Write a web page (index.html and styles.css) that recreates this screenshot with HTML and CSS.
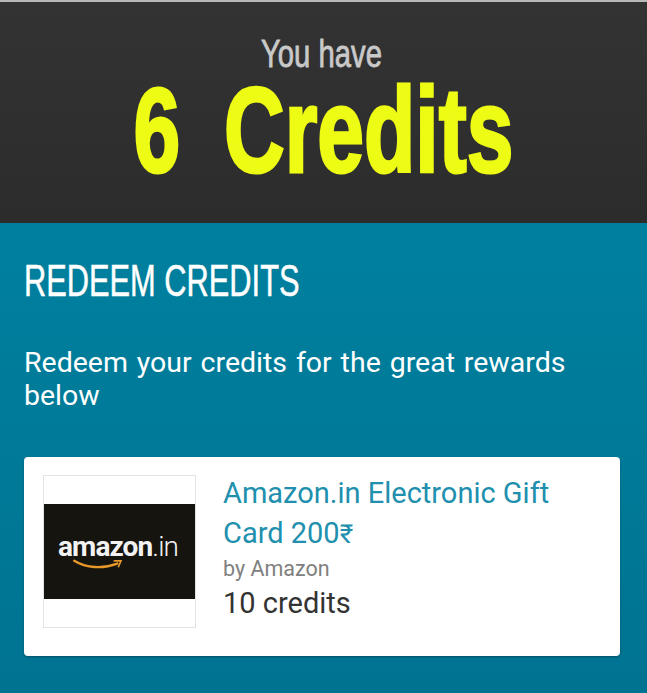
FILE: index.html
```html
<!DOCTYPE html>
<html lang="en">
<head>
    <meta charset="UTF-8">
    <meta name="viewport" content="width=device-width, initial-scale=1.0">
    <title>Credits</title>
    <link rel="stylesheet" href="styles.css">
</head>
<body>
    <div class="balance">
        <div class="balance-label">You have</div>
        <div class="balance-value">6&nbsp;Credits</div>
    </div>
    <div class="redeem">
        <h1 class="redeem-title">REDEEM CREDITS</h1>
        <p class="redeem-text">Redeem your credits for the great rewards below</p>
        <div class="reward">
            <div class="reward-thumb">
                <div class="logo">
                    <span class="logo-word">amazon<span class="logo-tld">.in</span></span>
                    <svg class="logo-smile" viewBox="0 0 56 12" width="52" height="11">
                        <path d="M1 2 C14 10 32 11 48 5" fill="none" stroke="#e8992a" stroke-width="2.6" stroke-linecap="round"/>
                        <path d="M44 2 L52 2 L49 9" fill="none" stroke="#e8992a" stroke-width="1.8"/>
                    </svg>
                </div>
            </div>
            <div class="reward-info">
                <div class="reward-name">Amazon.in Electronic Gift Card 200<span class="rupee">₹</span></div>
                <div class="reward-by">by Amazon</div>
                <div class="reward-cost">10 credits</div>
            </div>
        </div>
    </div>
</body>
</html>
```

FILE: styles.css
```css
* {
    box-sizing: border-box;
}

html, body {
    height: 100%;
}

body {
    display: flex;
    flex-direction: column;
    margin: 0;
    font-family: Roboto, sans-serif;
    background-color: #007594;
}

.balance {
    height: 223px;
    padding-top: 33px;
    border-top: 2px solid #b9b9b9;
    background: linear-gradient(#333333, #2c2c2c);
    text-align: center;
    font-family: "Liberation Sans", sans-serif;
}

/* no condensed face installed, so the headings are squeezed */
.balance-label {
    margin-right: 4px;
    font-size: 38px;
    line-height: 38px;
    color: #c9c9c9;
    -webkit-text-stroke: 0.8px #c9c9c9;
    transform: scaleX(0.77);
}

.balance-value {
    margin-top: 4px;
    font-size: 120px;
    line-height: 106px;
    font-weight: bold;
    word-spacing: 29px;
    color: #eefb14;
    -webkit-text-stroke: 3px #eefb14;
    transform: scaleX(0.7);
}

.redeem {
    flex: 1;
    padding: 34px 24px 0 24px;
    background: linear-gradient(#00809f, #007391);
    color: #fff;
}

.redeem-title {
    margin: 0;
    font-family: "Liberation Sans", sans-serif;
    font-size: 44px;
    line-height: 48px;
    font-weight: normal;
    white-space: nowrap;
    -webkit-text-stroke: 0.5px #fff;
    transform: scaleX(0.7);
    transform-origin: left center;
}

.redeem-text {
    margin: 41px 0 0 0;
    font-size: 28.5px;
    line-height: 33px;
    word-spacing: 1.8px;
}

.reward {
    display: flex;
    gap: 27px;
    height: 199px;
    margin: 45px 3px 0 0;
    padding: 18px 19px;
    border-radius: 4px;
    background-color: #fff;
    box-shadow: 0 1px 2px rgba(0, 0, 0, 0.3);
}

.reward-thumb {
    display: flex;
    align-items: center;
    flex: none;
    width: 153px;
    height: 153px;
    border: 1px solid #e3e3e3;
}

.logo {
    display: flex;
    flex-direction: column;
    align-items: center;
    justify-content: center;
    width: 100%;
    height: 95px;
    background-color: #16140f;
}

.logo-word {
    margin-right: 3px;
    font-size: 28px;
    line-height: 28px;
    font-weight: bold;
    letter-spacing: -0.9px;
    color: #f2f2f2;
}

.logo-tld {
    font-weight: 300;
}

.logo-smile {
    margin: -2px 42px 0 0;
}

.reward-info {
    margin-top: -2px;
}

.reward-name {
    font-size: 29px;
    line-height: 40px;
    color: #2190ae;
}

.rupee {
    font-size: 26px;
}

.reward-by {
    margin-top: 1px;
    font-size: 21.5px;
    line-height: 28px;
    color: #808080;
}

.reward-cost {
    margin-top: 3px;
    font-size: 29px;
    line-height: 34px;
    color: #333333;
}
```
